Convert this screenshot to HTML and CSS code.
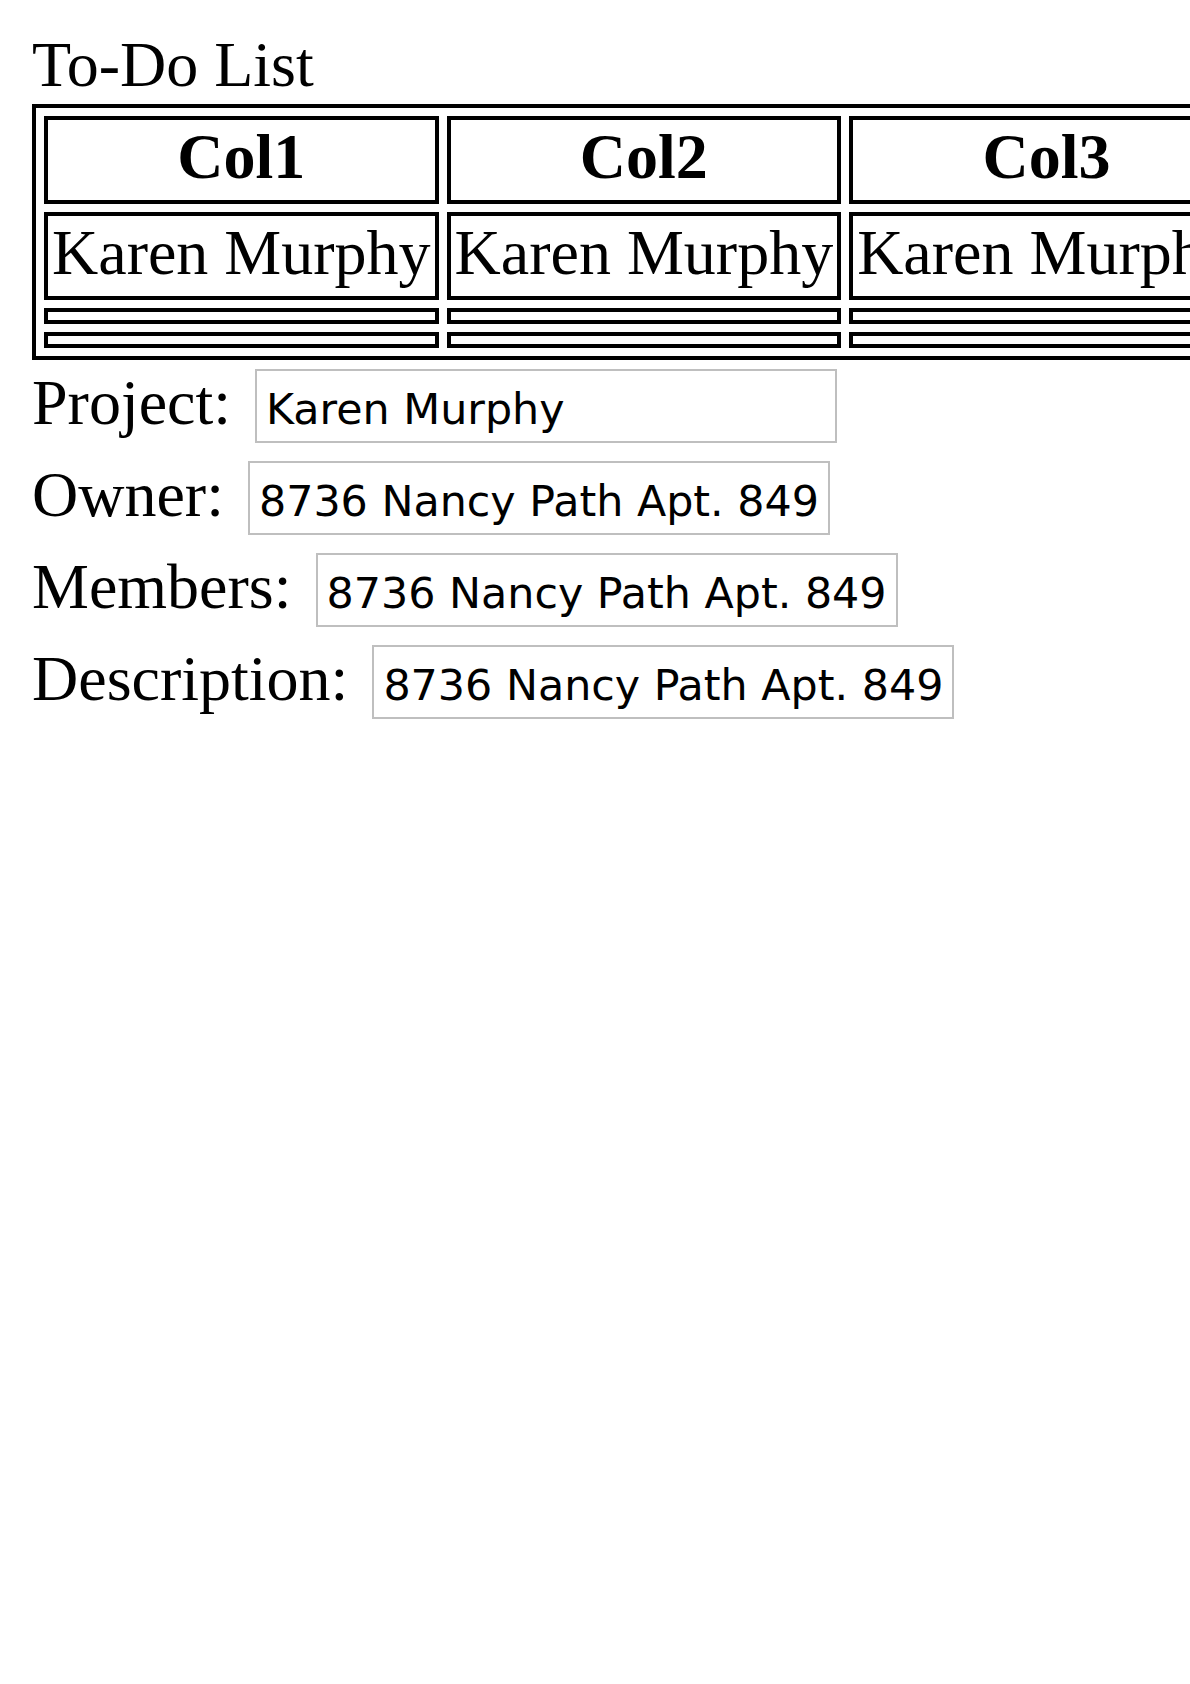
FILE: index.html
```html
<!DOCTYPE html>
<html>
<head>
<meta charset="utf-8">
<title>To-Do List</title>
<link rel="stylesheet" href="styles.css">
</head>
<body>
<div class="title">To-Do List</div>
<div class="table-wrap">
<table class="grid">
  <tr><th>Col1</th><th>Col2</th><th>Col3</th></tr>
  <tr><td>Karen Murphy</td><td>Karen Murphy</td><td>Karen Murphy</td></tr>
  <tr class="empty"><td></td><td></td><td></td></tr>
  <tr class="empty"><td></td><td></td><td></td></tr>
</table>
</div>
<div class="form">
  <div class="field"><label class="label">Project:</label><input class="input" type="text" value="Karen Murphy"></div>
  <div class="field"><label class="label">Owner:</label><input class="input" type="text" value="8736 Nancy Path Apt. 849"></div>
  <div class="field"><label class="label">Members:</label><input class="input" type="text" value="8736 Nancy Path Apt. 849"></div>
  <div class="field"><label class="label">Description:</label><input class="input" type="text" value="8736 Nancy Path Apt. 849"></div>
</div>
</body>
</html>
```
FILE: styles.css
```css
body {
  margin: 32px 0 32px 32px;
  font-family: "Liberation Serif", "Times New Roman", serif;
  font-size: 64px;
  color: #000;
  background: #fff;
}

.title {
  line-height: 66px;
  padding-bottom: 6px;
}

.table-wrap {
  overflow: hidden;
}

.grid {
  border: 4px solid #000;
  border-collapse: separate;
  border-spacing: 8px;
}

.grid th,
.grid td {
  border: 4px solid #000;
  padding: 4px 4px 10px;
  line-height: 66px;
  font-size: 64px;
  white-space: nowrap;
}

.grid th {
  font-weight: bold;
  text-align: center;
}

.grid td {
  text-align: left;
}

.grid .empty td {
  padding: 4px;
  line-height: 0;
}

.field {
  display: flex;
  align-items: baseline;
  gap: 24px;
  padding: 9px 0;
}

.label {
  line-height: 66px;
}

.input {
  box-sizing: border-box;
  width: 582px;
  height: 74px;
  margin: 0;
  padding: 6px 8px 0 9px;
  border: 2px solid #bfbfbf;
  background: #fff;
  color: #000;
  font-family: "DejaVu Sans", "Liberation Sans", sans-serif;
  font-size: 42.8px;
  outline: none;
}
```
